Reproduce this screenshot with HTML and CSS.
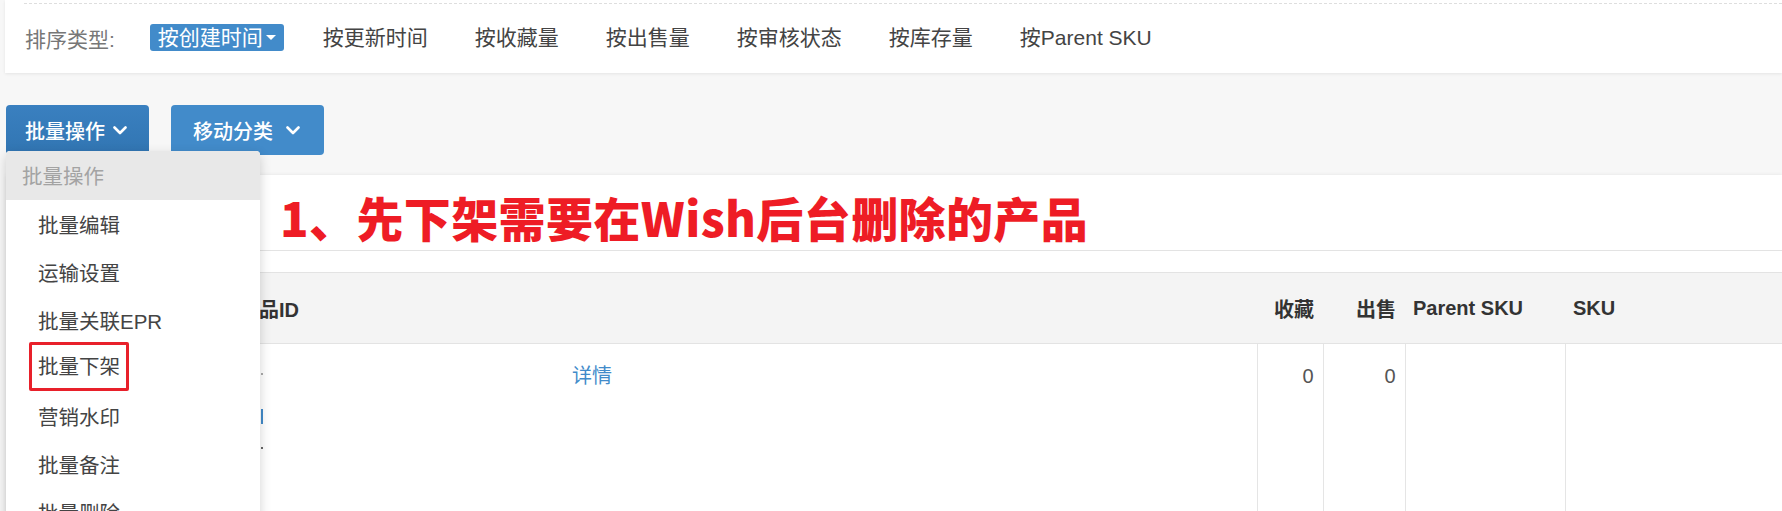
FILE: index.html
```html
<!DOCTYPE html>
<html lang="zh-CN">
<head>
<meta charset="utf-8">
<title>产品列表</title>
<link rel="stylesheet" href="styles.css">
</head>
<body>
<div class="page">
  <div class="topbar">
    <div class="dashed"></div>
    <div class="sort-row">
      <span class="sort-label">排序类型:</span>
      <span class="sort-item active">按创建时间<span class="caret"></span></span>
      <span class="sort-item">按更新时间</span>
      <span class="sort-item">按收藏量</span>
      <span class="sort-item">按出售量</span>
      <span class="sort-item">按审核状态</span>
      <span class="sort-item">按库存量</span>
      <span class="sort-item">按Parent SKU</span>
    </div>
  </div>

  <div class="actions">
    <button class="btn btn-dark">批量操作<svg class="chev" width="14" height="9" viewBox="0 0 14 9"><path d="M1.5 1.5 L7 7 L12.5 1.5" fill="none" stroke="#fff" stroke-width="2.6" stroke-linecap="round" stroke-linejoin="round"/></svg></button>
    <button class="btn btn-light">移动分类<svg class="chev wide" width="14" height="9" viewBox="0 0 14 9"><path d="M1.5 1.5 L7 7 L12.5 1.5" fill="none" stroke="#fff" stroke-width="2.6" stroke-linecap="round" stroke-linejoin="round"/></svg></button>

    <div class="menu">
      <div class="menu-head">批量操作</div>
      <div class="menu-item">批量编辑</div>
      <div class="menu-item">运输设置</div>
      <div class="menu-item">批量关联EPR</div>
      <div class="menu-item"><span class="mark">批量下架</span></div>
      <div class="menu-item">营销水印</div>
      <div class="menu-item">批量备注</div>
      <div class="menu-item">批量删除</div>
    </div>
  </div>

  <div class="card">
    <div class="card-head">
      <h2 class="note">1、先下架需要在Wish后台删除的产品</h2>
    </div>
    <table class="grid">
      <colgroup>
        <col class="c-main">
        <col class="c-fav">
        <col class="c-sold">
        <col class="c-psku">
        <col class="c-sku">
      </colgroup>
      <thead>
        <tr>
          <th class="th-main">产品ID</th>
          <th class="num">收藏</th>
          <th class="num">出售</th>
          <th>Parent SKU</th>
          <th>SKU</th>
        </tr>
      </thead>
      <tbody>
        <tr>
          <td class="td-main">
            <div class="main-inner">
              <div class="thumb">
                <span class="dot dot1"></span>
                <span class="bar"></span>
                <span class="dot dot2"></span>
              </div>
              <a class="link">详情</a>
            </div>
          </td>
          <td class="num">0</td>
          <td class="num">0</td>
          <td></td>
          <td></td>
        </tr>
      </tbody>
    </table>
  </div>
</div>
</body>
</html>
```

FILE: styles.css
```css
html, body {
  margin: 0;
  padding: 0;
}
body {
  background: #f7f7f7;
  font-family: "Liberation Sans", "Noto Sans CJK SC", sans-serif;
  font-size: 20px;
  color: #333;
  overflow: hidden;
  height: 511px;
}
.page {
  width: 1782px;
}

/* top sort bar */
.topbar {
  margin-left: 5px;
  height: 73px;
  background: #fff;
  box-shadow: 0 1px 3px rgba(0,0,0,0.08);
  padding-top: 3px;
  box-sizing: border-box;
}
.dashed {
  margin-left: 19px;
  border-top: 1px dashed #dedede;
}
.sort-row {
  display: flex;
  align-items: center;
  gap: 31px;
  margin-top: 20px;
  padding-left: 20px;
  height: 27px;
  font-size: 21px;
}
.sort-label {
  color: #777;
  margin-right: 4px;
}
.sort-item {
  padding: 0 8px;
  color: #444;
  line-height: 27px;
  height: 27px;
  display: flex;
  align-items: center;
  white-space: nowrap;
}
.sort-item.active {
  background: #428bca;
  color: #fff;
  border-radius: 3px;
}
.caret {
  display: inline-block;
  width: 0;
  height: 0;
  border-left: 5px solid transparent;
  border-right: 5px solid transparent;
  border-top: 5px solid #fff;
  margin-left: 3px;
}

/* action buttons */
.actions {
  position: relative;
  margin-top: 32px;
  padding-left: 6px;
  display: flex;
  gap: 22px;
}
.btn {
  height: 50px;
  border: none;
  border-radius: 4px;
  color: #fff;
  font-family: "Noto Sans CJK SC", "Liberation Sans", sans-serif;
  font-size: 20px;
  font-weight: 500;
  display: flex;
  align-items: center;
  cursor: pointer;
}
.btn-dark {
  width: 143px;
  padding: 0 0 0 19px;
  background: linear-gradient(#3a80c0, #3175b2);
}
.btn-light {
  width: 153px;
  padding: 0 0 0 22px;
  background: #428bca;
}
.chev {
  margin-left: 8px;
}
.chev.wide {
  margin-left: 13px;
}

/* dropdown */
.menu {
  position: absolute;
  left: 6px;
  top: 46px;
  width: 254px;
  height: 420px;
  background: #fff;
  border-radius: 4px 4px 0 0;
  box-shadow: 0 4px 12px rgba(0,0,0,0.18);
  z-index: 5;
  overflow: hidden;
  font-family: "Noto Sans CJK SC", "Liberation Sans", sans-serif;
  font-size: 20.5px;
}
.menu-head {
  height: 49px;
  line-height: 49px;
  background: #e8e8e8;
  color: #a3a3a3;
  padding-left: 16px;
}
.menu-item {
  height: 48px;
  display: flex;
  align-items: center;
  padding-left: 32px;
  color: #444;
  font-family: "Liberation Sans", "Noto Sans CJK SC", sans-serif;
}
.mark {
  display: inline-block;
  border: 3px solid #e8202a;
  border-radius: 2px;
  padding: 10px 6px 9px;
  margin-left: -9px;
  margin-top: -4px;
  line-height: 24px;
}

/* card */
.card {
  margin: 20px 0 0 6px;
  background: #fff;
  box-shadow: 0 0 4px rgba(0,0,0,0.08);
  height: 400px;
}
.card-head {
  height: 76px;
  border-bottom: 1px solid #e3e3e3;
  box-sizing: border-box;
  padding-left: 274px;
}
.note {
  margin: 0;
  padding-top: 12px;
  font-family: "Noto Sans CJK SC", sans-serif;
  font-weight: 900;
  font-size: 47px;
  line-height: 60px;
  color: #ee1c25;
  letter-spacing: 0.4px;
}

/* table */
.grid {
  margin-top: 21px;
  width: 1776px;
  border-collapse: collapse;
  table-layout: fixed;
}
.c-main { width: 1251px; }
.c-fav { width: 66px; }
.c-sold { width: 82px; }
.c-psku { width: 160px; }
.c-sku { width: 217px; }
.grid th {
  height: 70px;
  background: #f4f4f4;
  border-top: 1px solid #e3e3e3;
  border-bottom: 1px solid #e3e3e3;
  text-align: left;
  font-weight: bold;
  color: #333;
  padding: 0 8px;
  white-space: nowrap;
}
.grid th.th-main {
  padding-left: 233px;
}
.grid th.num, .grid td.num {
  text-align: right;
  padding-right: 9px;
}
.grid td {
  height: 168px;
  vertical-align: top;
  border-left: 1px solid #e5e5e5;
  padding: 18px 8px 0;
  color: #555;
  line-height: 28px;
}
.grid td.td-main {
  border-left: none;
  padding: 0;
}
.main-inner {
  display: flex;
  padding-top: 17px;
}
.thumb {
  position: relative;
  width: 306px;
  margin-left: 255px;
  height: 100px;
}
.bar {
  position: absolute;
  left: 0;
  top: 48px;
  width: 2px;
  height: 15px;
  background: #428bca;
}
.dot {
  position: absolute;
  left: 0;
  width: 2px;
  height: 2px;
  background: #aaa;
}
.dot1 { top: 12px; }
.dot2 { top: 86px; background: #666; }
.link {
  color: #428bca;
  margin-left: 5px;
  font-family: "Noto Sans CJK SC", sans-serif;
  line-height: 28px;
}
```
